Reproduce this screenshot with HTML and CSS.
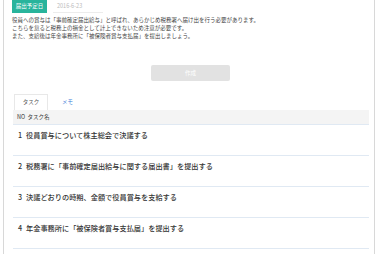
FILE: index.html
```html
<!DOCTYPE html>
<html lang="ja">
<head>
    <meta charset="UTF-8">
    <meta name="viewport" content="width=device-width, initial-scale=1.0">
    <title>役員賞与</title>
    <link rel="stylesheet" href="styles.css">
</head>
<body>
    <div class="panel">
        <div class="due">
            <span class="badge">届出予定日</span>
            <span class="date">2016-6-23</span>
        </div>

        <p class="note">
            役員への賞与は「事前確定届出給与」と呼ばれ、あらかじめ税務署へ届け出を行う必要があります。<br>
            こちらを怠ると税務上の損金として計上できないため注意が必要です。<br>
            また、支給後は年金事務所に「被保険者賞与支払届」を提出しましょう。
        </p>

        <div class="actions">
            <button class="create">作成</button>
        </div>

        <div class="tabs">
            <a class="tab active" href="#">タスク</a>
            <a class="tab" href="#">メモ</a>
        </div>

        <div class="tasks">
            <div class="task-head">NO&nbsp;&nbsp;タスク名</div>
            <div class="task"><span class="no">1</span>役員賞与について株主総会で決議する</div>
            <div class="task"><span class="no">2</span>税務署に「事前確定届出給与に関する届出書」を提出する</div>
            <div class="task"><span class="no">3</span>決議どおりの時期、金額で役員賞与を支給する</div>
            <div class="task"><span class="no">4</span>年金事務所に「被保険者賞与支払届」を提出する</div>
            <div class="task"><span class="no">5</span>源泉所得税を納付する</div>
        </div>
    </div>
</body>
</html>
```

FILE: styles.css
```css
body {
    margin: 0;
    padding: 0;
    background: #fff;
    font-family: "Noto Sans CJK JP", "Noto Sans", sans-serif;
    color: #444;
}

.panel {
    margin: 0 5px 0 3px;
    height: 254px;
    overflow: hidden;
    border-left: 1px solid #d8d8d8;
    border-right: 1px solid #d8d8d8;
    padding: 0 5px 0 8px;
}

/* due date */
.due {
    display: flex;
    align-items: center;
    height: 13px;
}
.badge {
    background: #28b49c;
    color: #fff;
    font-size: 5.5px;
    line-height: 13px;
    width: 35px;
    text-align: center;
}
.date {
    margin-left: 6px;
    width: 46px;
    padding-left: 4px;
    color: #bbb;
    font-size: 5.5px;
    line-height: 11px;
    border-bottom: 1px solid #ececec;
}

.note {
    margin: 3px 0 0;
    font-size: 5.5px;
    line-height: 8px;
    color: #444;
}

.actions {
    display: flex;
    justify-content: center;
    margin-top: 25px;
}
.create {
    width: 79px;
    height: 16px;
    border: none;
    border-radius: 2px;
    background: #e2e2e2;
    color: #fff;
    font-family: inherit;
    font-size: 5.5px;
    padding: 0;
}

/* tabs */
.tabs {
    display: flex;
    margin: 13px 0 0 2px;
}
.tab {
    height: 16px;
    line-height: 16px;
    font-size: 5.5px;
    text-decoration: none;
    color: #3b7dd8;
    padding: 0 14px 0 14px;
}
.tab.active {
    width: 34px;
    padding: 0;
    box-sizing: border-box;
    text-align: center;
    color: #555;
    border: 1px solid #e8e8e8;
    border-bottom: none;
    line-height: 15px;
}

/* task list */
.tasks {
    margin-left: 1px;
}
.task-head {
    height: 14px;
    line-height: 14px;
    background: #f4f4f4;
    border-bottom: 1px solid #e0e9f3;
    font-size: 5.5px;
    color: #333;
    padding-left: 4px;
}
.task {
    height: 25px;
    border-bottom: 1px solid #e0e9f3;
    font-size: 7.2px;
    font-weight: 500;
    line-height: 10px;
    padding-top: 5px;
    padding-left: 5px;
    color: #333;
}
.task .no {
    display: inline-block;
    width: 8px;
}
```
